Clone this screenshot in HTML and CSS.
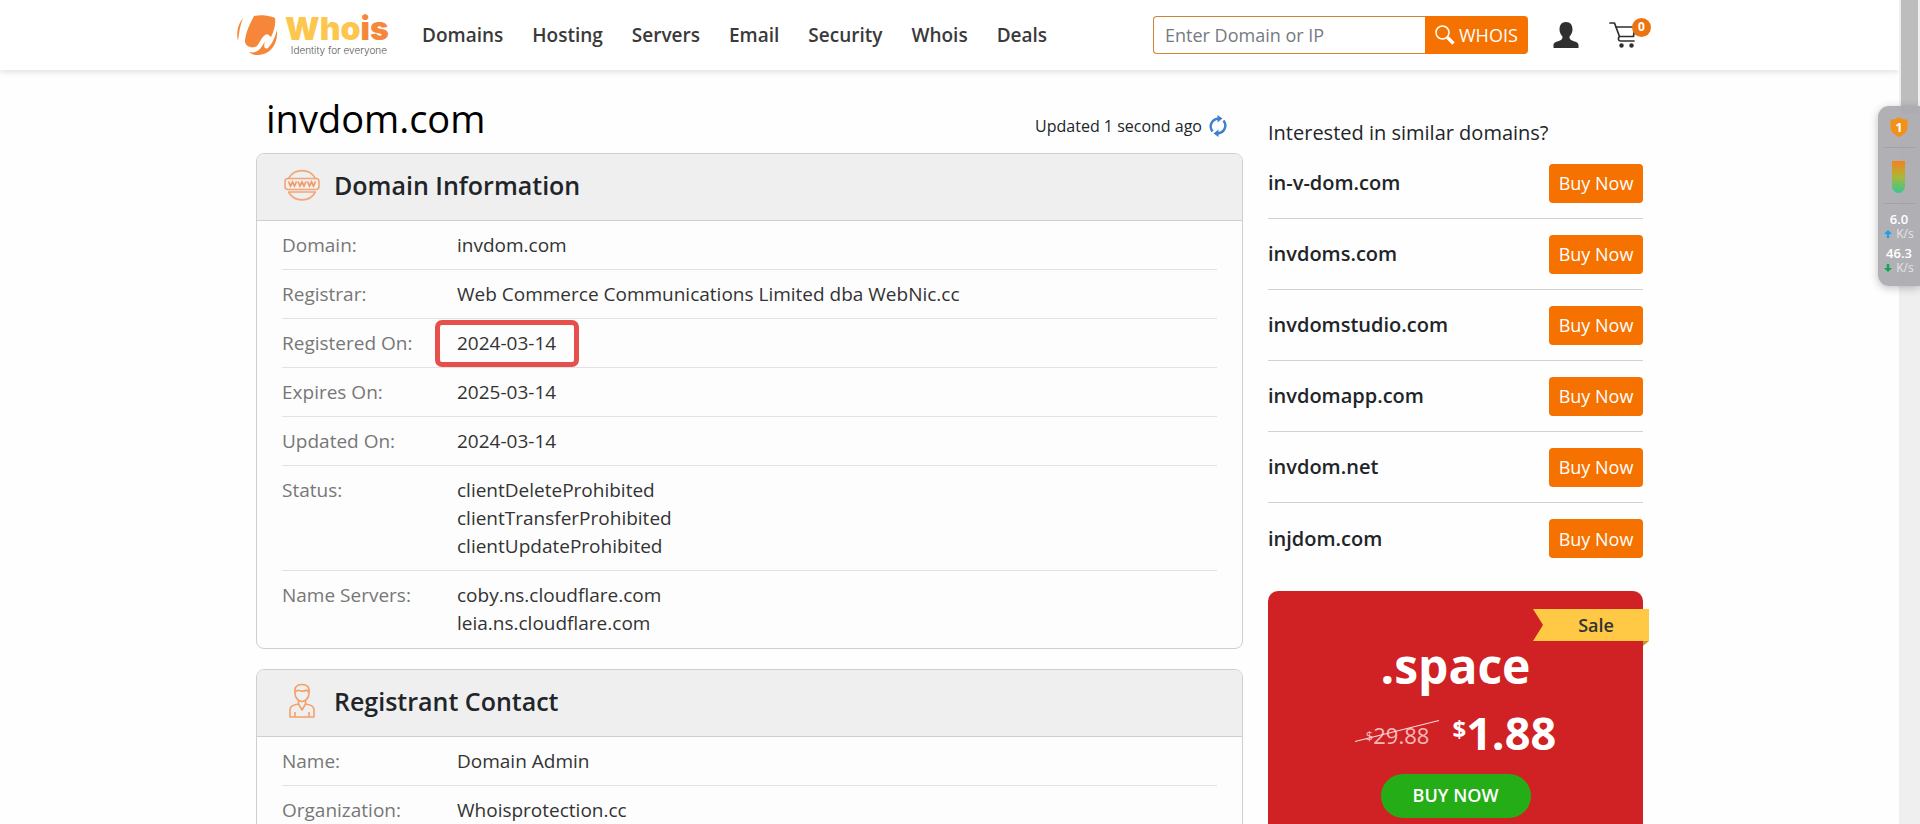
FILE: index.html
```html
<!DOCTYPE html>
<html lang="en">
<head>
<meta charset="utf-8">
<meta name="viewport" content="width=device-width, initial-scale=1">
<title>invdom.com - Whois</title>
<link rel="stylesheet" href="styles.css">
</head>
<body>
<div class="window">
  <div class="page">
    <header class="site-header">
      <div class="header-inner">
        <a class="logo" href="#">
          <svg class="logo-mark" viewBox="0 0 40 40" aria-hidden="true">
            <path fill="#f6873a" d="M6 3C1 9 -1 18 1 26C2 18 3 10 6 3Z"/>
            <path fill="#f6873a" d="M17 1C25 -1 34 1 38 3C39 9 37 16 34 22C32 21 31 18 28 20C25 22 23 27 20 31C16 34 9 32 8 27C8 20 12 10 17 1Z"/>
            <path fill="#f6873a" d="M40 15C41 30 33 40 20 40C17 40 14 39 12 37C20 39 24 34 28 26C26 32 28 35 31 33C35 29 38 22 40 15Z"/>
          </svg>
          <span class="logo-words">
            <span class="logo-name">Who<span class="logo-accent">is</span></span>
            <span class="logo-tag">Identity for everyone</span>
          </span>
        </a>
        <nav class="main-nav">
          <a href="#">Domains</a>
          <a href="#">Hosting</a>
          <a href="#">Servers</a>
          <a href="#">Email</a>
          <a href="#">Security</a>
          <a href="#">Whois</a>
          <a href="#">Deals</a>
        </nav>
        <form class="search">
          <input type="text" placeholder="Enter Domain or IP" aria-label="Enter Domain or IP">
          <button type="button">
            <svg viewBox="0 0 20 20" aria-hidden="true"><circle cx="7.5" cy="7.5" r="6.5" fill="none" stroke="#fff" stroke-width="1.6"/><path d="M12.5 12.5L18.5 18.5" stroke="#fff" stroke-width="3.4"/></svg>
            WHOIS
          </button>
        </form>
        <a class="account" href="#" aria-label="Account">
          <svg viewBox="0 0 26 26" aria-hidden="true"><path fill="#2f2f2f" d="M13 0C17.500 0 19.500 3 19.500 7.500C19.500 10.500 18 13 16.500 14.500C16.500 17 17 17.500 19 18.500C22.500 19.800 25.500 20.500 25.500 23V26H.5V23C.5 20.500 3.500 19.800 7 18.500C9 17.500 9.500 17 9.500 14.500C8 13 6.500 10.500 6.500 7.500C6.500 3 8.500 0 13 0Z"/></svg>
        </a>
        <a class="cart" href="#" aria-label="Cart">
          <svg viewBox="0 0 28 26" aria-hidden="true"><g fill="none" stroke="#2f2f2f" stroke-width="1.700" stroke-linecap="round" stroke-linejoin="round"><path d="M1 1H5.500L10.500 14.500C8.500 16.500 9.500 19 11.500 19H25"/><path d="M7 5H26L24.500 14"/><path d="M10.500 14.500H24.500"/></g><circle cx="12.500" cy="23.500" r="2.200" fill="#2f2f2f"/><circle cx="22.500" cy="23.500" r="2.200" fill="#2f2f2f"/></svg>
          <span class="cart-count">0</span>
        </a>
      </div>
    </header>

    <main class="content">
      <section class="results">
        <div class="title-row">
          <h1>invdom.com</h1>
          <p class="updated">Updated 1 second ago
            <svg viewBox="0 0 18 22" aria-hidden="true"><g fill="none" stroke="#3f7fd0" stroke-width="2.400"><path d="M3.500 16.500C-.5 11 2.500 4 10 3.500"/><path d="M14.500 5.500C18.500 11 15.500 18 8 18.500"/></g><path fill="#3f7fd0" d="M8.500 0L13.500 3.500L8.500 7.500ZM9.500 14.500L4.500 18.500L9.500 22Z"/></svg>
          </p>
        </div>

        <article class="card">
          <header class="card-head">
            <svg viewBox="0 0 36 36" aria-hidden="true"><g fill="none" stroke="#f4a577" stroke-width="1.600"><path d="M4.500 11.500A15.500 15.500 0 0 1 31.500 11.500M4.500 25A15.500 15.500 0 0 0 31.500 25"/><path d="M4 25H32"/><rect x="1" y="11.500" width="34" height="11" rx="3"/></g><path fill="none" stroke="#f29a66" stroke-width="1.700" d="M4.500 14.500L6.500 19L8.500 15L10.500 19L12.500 14.500M14 14.500L16 19L18 15L20 19L22 14.500M23.500 14.500L25.500 19L27.500 15L29.500 19L31.500 14.500"/></svg>
            <h2>Domain Information</h2>
          </header>
          <dl class="facts">
            <div><dt>Domain:</dt><dd>invdom.com</dd></div>
            <div><dt>Registrar:</dt><dd>Web Commerce Communications Limited dba WebNic.cc</dd></div>
            <div><dt>Registered On:</dt><dd><span class="marked">2024-03-14</span></dd></div>
            <div><dt>Expires On:</dt><dd>2025-03-14</dd></div>
            <div><dt>Updated On:</dt><dd>2024-03-14</dd></div>
            <div><dt>Status:</dt><dd>clientDeleteProhibited<br>clientTransferProhibited<br>clientUpdateProhibited</dd></div>
            <div><dt>Name Servers:</dt><dd>coby.ns.cloudflare.com<br>leia.ns.cloudflare.com</dd></div>
          </dl>
        </article>

        <article class="card">
          <header class="card-head">
            <svg viewBox="0 0 36 36" aria-hidden="true"><g fill="none" stroke="#f4a06a" stroke-width="1.600" stroke-linejoin="round"><path d="M11 10C10 4 13 1.500 18 1.500S26 4 25 10C25 15 21.500 18.500 18 18.500S11 15 11 10Z"/><path d="M11 9.500C12 7.500 13 7 15 7.500C18 8.500 21 8 22.500 7C23.500 8 24 9 25 9.500"/><path d="M14.500 17.500V21L18 27L21.500 21V17.500"/><path d="M14.500 21C9 22 6 23 6 27V34H30V27C30 23 27 22 21.500 21M11 29V34M25 29V34"/></g></svg>
            <h2>Registrant Contact</h2>
          </header>
          <dl class="facts">
            <div><dt>Name:</dt><dd>Domain Admin</dd></div>
            <div><dt>Organization:</dt><dd>Whoisprotection.cc</dd></div>
          </dl>
        </article>
      </section>

      <aside class="sidebar">
        <h3>Interested in similar domains?</h3>
        <ul class="similar">
          <li><span>in-v-dom.com</span><button type="button">Buy Now</button></li>
          <li><span>invdoms.com</span><button type="button">Buy Now</button></li>
          <li><span>invdomstudio.com</span><button type="button">Buy Now</button></li>
          <li><span>invdomapp.com</span><button type="button">Buy Now</button></li>
          <li><span>invdom.net</span><button type="button">Buy Now</button></li>
          <li><span>injdom.com</span><button type="button">Buy Now</button></li>
        </ul>
        <section class="promo">
          <span class="ribbon">
            <svg viewBox="0 0 116 38" aria-hidden="true"><path fill="#c9962c" d="M110 32H116L110 37Z"/><path fill="#ffc845" d="M0 0H116V32H0L10 16Z"/></svg>
            <b>Sale</b>
          </span>
          <h2>.space</h2>
          <p class="prices">
            <span class="price-old"><small>$</small>29.88<svg viewBox="0 0 84 22" aria-hidden="true"><path d="M0 21.500L84 .5" stroke="#fbdada" stroke-width="1.200"/></svg></span>
            <strong><small>$</small>1.88</strong>
          </p>
          <button type="button">BUY NOW</button>
        </section>
      </aside>
    </main>
  </div>

  <div class="scrollbar">
    <div class="thumb"></div>
    <svg class="arrow" viewBox="0 0 10 5" aria-hidden="true"><path fill="#444" d="M0 0H10L5 5Z"/></svg>
  </div>

  <div class="monitor">
    <svg class="shield" viewBox="0 0 18 20"><path fill="#f39019" d="M9 0C11 2 14 2.500 17.500 2.500V10C17.500 15 13.500 18 9 20C4.500 18 .5 15 .5 10V2.500C4 2.500 7 2 9 0Z"/><text x="9" y="14.500" text-anchor="middle">1</text></svg>
    <div class="meter"></div>
    <div class="rates">
      <span class="rate">6.0</span>
      <span class="unit"><svg viewBox="0 0 8 8"><path fill="#189ff0" d="M4 0L8 4H5.200V8H2.800V4H0Z"/></svg>K/s</span>
      <span class="rate">46.3</span>
      <span class="unit"><svg viewBox="0 0 8 8"><path fill="#10a556" d="M4 8L8 4H5.200V0H2.800V4H0Z"/></svg>K/s</span>
    </div>
  </div>
</div>
</body>
</html>
```
FILE: styles.css
```css
* { box-sizing: border-box; }

body {
  margin: 0;
  background: #fefefe;
  color: #212529;
  font-family: "Open Sans", "Noto Sans", sans-serif;
  font-size: 18px;
  line-height: 28px;
}

h1, h2, h3, p, ul, dl, dd { margin: 0; padding: 0; }
a { color: inherit; text-decoration: none; }
button, input { font: inherit; }
button { cursor: pointer; }
svg { display: block; flex: none; overflow: visible; }

.window {
  display: grid;
  grid-template-columns: minmax(0, 1fr) 21px;
  height: 100vh;
  overflow: hidden;
  position: relative;
}
.page { min-width: 0; }

/* Header */
.site-header {
  background: #fff;
  box-shadow: 0 2px 6px rgba(0, 0, 0, .12);
}
.header-inner {
  display: flex;
  align-items: center;
  max-width: 1425px;
  height: 70px;
  margin: 0 auto;
}
.logo { display: flex; align-items: center; gap: 8px; }
.logo-mark { width: 40px; height: 40px; }
.logo-words { display: flex; flex-direction: column; width: 102px; }
.logo-name {
  color: #fdc64d;
  font: 900 32px/30px Inter, sans-serif;
}
.logo-accent { color: #f6873a; }
.logo-tag {
  align-self: flex-end;
  color: #555;
  font: 300 10px/12px Inter, sans-serif;
  white-space: nowrap;
}
.main-nav {
  display: flex;
  gap: 29px;
  margin-left: 35px;
  color: #3a3a3a;
  font-size: 19px;
  font-weight: 600;
}
.search { display: flex; width: 375px; height: 38px; margin-left: auto; }
.search input {
  flex: 1;
  min-width: 0;
  padding: 0 11px;
  border: 1px solid #cf8334;
  border-right: 0;
  border-radius: 4px 0 0 4px;
  background: #fff;
  outline: 0;
}
.search input::placeholder { color: #757b81; opacity: 1; }
.search button {
  display: flex;
  align-items: center;
  gap: 4px;
  width: 103px;
  padding: 0 10px;
  border: 0;
  border-radius: 0 4px 4px 0;
  background: #f57200;
  color: #fff;
}
.search svg { width: 20px; height: 20px; }
.account { margin-left: 25px; }
.account svg { width: 26px; height: 26px; }
.cart { position: relative; margin: 0 25px 0 30px; }
.cart svg { width: 28px; height: 26px; }
.cart-count {
  position: absolute;
  top: -4px;
  right: -14px;
  width: 19px;
  height: 19px;
  border-radius: 50%;
  background: #ec7410;
  color: #fff;
  font-size: 12px;
  font-weight: 700;
  line-height: 18px;
  text-align: center;
}

/* Main columns */
.content {
  display: grid;
  grid-template-columns: minmax(0, 987fr) minmax(0, 375fr);
  gap: 25px;
  max-width: 1387px;
  margin: 0 auto;
}
.title-row {
  display: flex;
  align-items: center;
  justify-content: space-between;
  height: 83px;
  padding: 12px 16px 0 10px;
}
h1 { color: #000; font-size: 38px; font-weight: 400; line-height: 48px; }
.updated {
  display: flex;
  align-items: center;
  gap: 7px;
  padding-top: 16px;
  font-size: 16px;
}
.updated svg { width: 18px; height: 22px; }

.card {
  margin-bottom: 20px;
  border: 1px solid #cfcfcf;
  border-radius: 8px;
  background: #fdfdfd;
  overflow: hidden;
}
.card-head {
  display: flex;
  align-items: center;
  gap: 14px;
  height: 67px;
  padding: 0 27px 5px;
  border-bottom: 1px solid #cfcfcf;
  background: #efefef;
}
.card-head svg { width: 36px; height: 36px; }
.card-head h2 { color: #212529; font-size: 25px; font-weight: 600; }
.facts { padding: 0 25px 1px; font-size: 19px; }
.facts > div {
  display: grid;
  grid-template-columns: 175px minmax(0, 1fr);
  padding: 10px 0;
  border-bottom: 1px solid #e2e2e2;
}
.facts > div:last-child { border-bottom: 0; }
.facts dt { color: #777; }
.facts dd { color: #333; }
.marked { position: relative; }
.marked::after {
  content: "";
  position: absolute;
  inset: -10px -23px -11px -22px;
  border: 5px solid #e5504d;
  border-radius: 7px;
}

/* Sidebar */
.sidebar { padding-top: 48px; }
.sidebar h3 { font-size: 20px; font-weight: 400; line-height: 30px; }
.similar { list-style: none; }
.similar li {
  display: flex;
  align-items: center;
  justify-content: space-between;
  height: 71px;
  border-bottom: 1px solid #d2d2d2;
  font-size: 20px;
  font-weight: 600;
}
.similar li:last-child { border-bottom: 0; }
.similar button {
  width: 94px;
  height: 39px;
  padding: 0;
  border: 0;
  border-radius: 4px;
  background: #f57200;
  color: #fff;
  font-size: 18px;
  font-weight: 400;
}
.promo {
  display: flex;
  flex-direction: column;
  align-items: center;
  position: relative;
  height: 300px;
  margin-top: 17px;
  padding-top: 43px;
  border-radius: 10px;
  background: #d02224;
  color: #fff;
}
.ribbon { position: absolute; top: 18px; right: -6px; width: 116px; height: 32px; }
.ribbon svg { width: 116px; height: 38px; }
.ribbon b {
  position: absolute;
  inset: 0 0 0 10px;
  color: #333;
  font-size: 18px;
  font-weight: 600;
  line-height: 32px;
  text-align: center;
}
.promo h2 { font-size: 48px; font-weight: 700; line-height: 64px; }
.prices {
  display: flex;
  align-items: center;
  gap: 23px;
  height: 66px;
  padding-left: 11px;
}
.price-old { position: relative; padding-top: 8px; color: #f6b9b9; font-size: 22px; }
.price-old small { font-size: 13px; vertical-align: 3px; }
.price-old svg { position: absolute; left: -11px; top: 7px; width: 84px; height: 22px; }
.prices strong { font-size: 45px; font-weight: 700; line-height: 56px; }
.prices strong small { font-size: 24px; vertical-align: 12px; }
.promo button {
  width: 150px;
  height: 44px;
  margin-top: 10px;
  padding: 0 0 2px;
  border: 0;
  border-radius: 22px;
  background: #25ad18;
  color: #fff;
  font-weight: 600;
}

/* Window scrollbar */
.scrollbar {
  display: flex;
  flex-direction: column;
  align-items: center;
  justify-content: space-between;
  padding-bottom: 9px;
  background: #efefef;
}
.thumb { width: 17px; height: 114px; background: #bdbdbd; }
.arrow { width: 10px; height: 5px; }

/* Network speed widget docked over the window edge */
.monitor {
  display: flex;
  flex-direction: column;
  align-items: center;
  position: absolute;
  top: 106px;
  right: 0;
  width: 42px;
  padding: 11px 0 12px;
  border-radius: 11px 0 0 11px;
  background: rgba(172, 172, 176, .94);
  box-shadow: 0 2px 8px rgba(0, 0, 0, .25);
  color: #fff;
}
.shield { width: 18px; height: 20px; }
.shield text { fill: #fff; font: 700 13px "Open Sans", sans-serif; }
.meter {
  width: 32px;
  height: 57px;
  margin: 10px 0 6px;
  padding: 13px 9px 10px;
  border: solid #a3a3a7;
  border-width: 1px 0;
}
.meter::before {
  content: "";
  display: block;
  height: 32px;
  width: 13px;
  border-radius: 0 0 7px 7px;
  background: linear-gradient(#f5811c, #a9b838 50%, #35c795);
}
.rates { display: flex; flex-direction: column; align-items: center; }
.rate { font-size: 13px; font-weight: 600; line-height: 18px; }
.unit {
  display: flex;
  align-items: center;
  gap: 4px;
  color: #e4e4e6;
  font-size: 12px;
  line-height: 12px;
}
.unit + .rate { margin-top: 4px; }
.unit svg { width: 8px; height: 8px; }
```
